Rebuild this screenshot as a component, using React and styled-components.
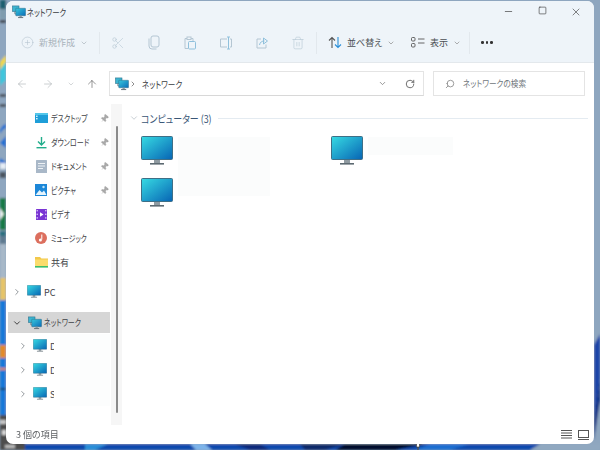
import React from 'react';
import styled, { createGlobalStyle } from 'styled-components';
import {
  CirclePlus, Scissors, ChevronDown, ChevronRight, ArrowLeft, ArrowRight, ArrowUp,
  RotateCw, Search, Minus, Square, X, Trash2, Pin,
} from 'lucide-react';

const Global = createGlobalStyle`
  html, body { margin: 0; padding: 0; width: 600px; height: 450px; overflow: hidden; background: #8ea6bf; }
  * { box-sizing: border-box; }
  body { font-family: "Noto Sans CJK JP", "Noto Sans", sans-serif; font-feature-settings: "palt"; }
`;

const Desktop = styled.div`
  position: relative;
  width: 600px;
  height: 450px;
  padding: 1px 6px 6px;
`;
const WallpaperSvg = styled.svg`
  position: absolute;
  left: 0;
  top: 0;
`;
const Window = styled.div`
  position: relative;
  height: 443px;
  background: #fff;
  border-radius: 7px;
  overflow: hidden;
  display: flex;
  flex-direction: column;
  filter: blur(0.3px);
`;
const Narrow = styled.span`
  display: inline-block;
  white-space: nowrap;
  transform: scaleX(${(p) => p.$s || 0.78});
  transform-origin: left center;
  margin-right: ${(p) => p.$mr || 0}px;
`;
const TitleBar = styled.div`
  height: 24px;
  flex: none;
  background: #eef4f9;
  display: flex;
  align-items: center;
  padding: 0 0 2px 6px;
`;
const TitleText = styled.span`
  font-size: 9.5px;
  color: #3a3d41;
  margin-left: 1px;
  flex: 1;
`;
const WinButton = styled.span`
  width: 34px;
  display: flex;
  justify-content: center;
  color: #333;
`;
const WinButtons = styled.div`
  display: flex;
  margin-right: 1px;
`;
const Toolbar = styled.div`
  height: 38px;
  flex: none;
  background: #eef4f9;
  border-bottom: 1px solid #e3e8ec;
  display: flex;
  align-items: center;
  padding-left: 15px;
  padding-bottom: 2px;
`;
const NewButton = styled.div`
  width: 78px;
  display: flex;
  align-items: center;
  color: #a9b3bb;
  font-size: 9px;
  gap: 5px;
`;
const Divider = styled.span`
  width: 1px;
  height: 22px;
  background: #e2e8ed;
  flex: none;
`;
const ToolIcon = styled.span`
  width: 36px;
  display: flex;
  justify-content: center;
  color: #b4c6d3;
`;
const MenuButton = styled.div`
  width: ${(p) => p.$w}px;
  padding-left: ${(p) => p.$pad}px;
  display: flex;
  align-items: center;
  font-size: 9px;
  color: #4a4f53;
  gap: 5px;
`;
const Dots = styled.span`
  margin-left: 11px;
  display: flex;
  gap: 2px;
  & > i { width: 2.5px; height: 2.5px; border-radius: 50%; background: #333; }
`;
const NavRow = styled.div`
  height: 41px;
  flex: none;
  display: flex;
  align-items: flex-start;
  padding: 8px 9px 0 3px;
`;
const NavIcon = styled.span`
  width: ${(p) => p.$w}px;
  height: 25px;
  display: flex;
  align-items: center;
  justify-content: center;
  color: ${(p) => p.$c};
`;
const AddressBox = styled.div`
  width: 315px;
  height: 25px;
  margin-left: 6px;
  border: 1px solid #e4e4e4;
  border-bottom-color: #d8d8d8;
  display: flex;
  align-items: center;
  padding-left: 5px;
  font-size: 9.5px;
  color: #3a3d41;
`;
const AddressText = styled.span`
  flex: 1;
  margin-left: 5px;
`;
const SearchBox = styled.div`
  width: 152px;
  height: 25px;
  margin-left: 9px;
  border: 1px solid #e4e4e4;
  display: flex;
  align-items: center;
  padding-left: 11px;
  gap: 8px;
  font-size: 9px;
  color: #70767b;
`;
const Body = styled.div`
  flex: 1;
  min-height: 0;
  display: flex;
`;
const Sidebar = styled.nav`
  width: 105px;
  flex: none;
  padding-top: 2px;
  font-size: 9px;
  color: #3e4246;
`;
const Row = styled.div`
  height: ${(p) => p.$h || 24}px;
  margin-top: ${(p) => p.$mt || 0}px;
  margin-left: ${(p) => (p.$active ? 2 : 0)}px;
  margin-right: ${(p) => (p.$active ? 1 : 0)}px;
  padding-left: ${(p) => (p.$active ? p.$pad - 2 : p.$pad)}px;
  background: ${(p) => (p.$active ? '#d6d6d6' : 'transparent')};
  display: flex;
  align-items: center;
  position: relative;
`;
const ChevronSlot = styled.span`
  width: 11px;
  display: flex;
  justify-content: center;
  margin-right: ${(p) => p.$mr}px;
  color: ${(p) => p.$c || '#8a8f94'};
`;
const RowLabel = styled.span`
  margin-left: ${(p) => p.$ml}px;
  flex: 1;
  min-width: 0;
  white-space: nowrap;
`;
const ClippedLabel = styled.span`
  width: 4px;
  margin-left: 3px;
  overflow: hidden;
  white-space: nowrap;
`;
const PinSlot = styled.span`
  width: 11px;
  margin-right: 1px;
  display: flex;
  justify-content: center;
  color: #999;
  transform: rotate(40deg);
`;
const ScrollTrack = styled.div`
  width: 11px;
  flex: none;
  background: #f6f6f6;
  padding-top: 22px;
  display: flex;
  justify-content: center;
  & > i { width: 2px; height: 287px; background: #8b8b8b; border-radius: 1px; }
`;
const Content = styled.main`
  flex: 1;
  padding: 7px 6px 0 7px;
`;
const GroupHeader = styled.div`
  display: flex;
  align-items: center;
  height: 14px;
  font-size: 10.5px;
  color: #3a5676;
  gap: 2px;
  & > b {
    flex: 1;
    height: 1px;
    background: #e4ebf1;
    margin-left: 3px;
  }
`;
const FileGrid = styled.div`
  display: grid;
  grid-template-columns: 37px 92px 61px 37px 85px;
  grid-template-rows: 42px 42px;
  margin: 11px 0 0 12px;
`;
const FileCell = styled.div`
  grid-column: ${(p) => p.$col};
  grid-row: ${(p) => p.$row};
`;
const Smudge = styled.div`
  grid-column: ${(p) => p.$col};
  grid-row: ${(p) => p.$row};
  height: ${(p) => p.$h}px;
  background: #fbfcfc;
  margin-top: 1px;
`;
const SideSmudge = styled.span`
  position: absolute;
  left: 54px;
  top: 0;
  width: 50px;
  height: 100%;
  background: #fcfdfd;
`;
const StatusBar = styled.div`
  height: 19px;
  flex: none;
  display: flex;
  align-items: center;
  padding: 0 5px 0 10px;
  font-size: 9px;
  color: #5c5f62;
`;
const StatusText = styled.span`
  flex: 1;
`;
const StatusIcons = styled.span`
  display: flex;
  gap: 6px;
  align-items: center;
`;
const IconSlot = styled.span`
  width: 14px;
  display: flex;
  justify-content: center;
  flex: none;
`;

let uid = 0;
const Monitor = ({ size = 32 }) => {
  const id = `m${uid++}`;
  return (
    <svg width={size} height={size * 30 / 32} viewBox="0 0 32 30" style={{ display: 'block' }}>
      <defs>
        <linearGradient id={id} x1="0" y1="0" x2="1" y2="1">
          <stop offset="0" stopColor="#37dbe3" />
          <stop offset="1" stopColor="#0764b4" />
        </linearGradient>
      </defs>
      <rect x="13" y="23" width="6" height="4" fill="#8f9aa1" />
      <rect x="9" y="27" width="14" height="1.6" fill="#5d6a72" />
      <rect x="0.5" y="0.5" width="31" height="23" rx="1" fill={`url(#${id})`} stroke="#3f6f86" />
    </svg>
  );
};
const NetIcon = () => {
  const id = `n${uid++}`;
  return (
    <svg width="14" height="14" viewBox="0 0 15 14" style={{ display: 'block' }}>
      <defs>
        <linearGradient id={id} x1="0" y1="0" x2="1" y2="1">
          <stop offset="0" stopColor="#37c8dc" />
          <stop offset="1" stopColor="#0a6cb8" />
        </linearGradient>
      </defs>
      <rect x="0.5" y="0.5" width="7" height="6" fill="#3cb4d0" stroke="#2a6f8a" strokeWidth="0.6" />
      <path d="M3 6.5 V9 H5" stroke="#60707a" fill="none" strokeWidth="0.8" />
      <rect x="4" y="3" width="10.5" height="8" rx="0.5" fill={`url(#${id})`} stroke="#2c6a84" strokeWidth="0.5" />
      <rect x="8" y="11" width="2.5" height="1.5" fill="#8f9aa1" />
      <rect x="6.5" y="12.5" width="5.5" height="1" fill="#5d6a72" />
    </svg>
  );
};
const DesktopIcon = () => (
  <svg width="13" height="10" viewBox="0 0 13 10"><rect width="13" height="10" rx="0.5" fill="#1e9ed8" /><rect x="0" y="0" width="13" height="2" fill="#52c6ea" /><rect x="1" y="2.6" width="1.6" height="1.4" fill="#d5f1fb" /><rect x="1" y="5" width="1.6" height="1.4" fill="#d5f1fb" /></svg>
);
const DownloadIcon = () => (
  <svg width="13" height="13" viewBox="0 0 13 13"><path d="M6.5 1 V8.5 M3 5.5 L6.5 9 L10 5.5" stroke="#22ad8b" strokeWidth="1.4" fill="none" /><rect x="1.5" y="11" width="10" height="1.4" fill="#22ad8b" /></svg>
);
const DocIcon = () => (
  <svg width="11" height="13" viewBox="0 0 11 13"><rect width="11" height="13" rx="0.5" fill="#a9b8c8" /><rect x="2" y="3" width="7" height="1" fill="#eef2f5" /><rect x="2" y="5.5" width="7" height="1" fill="#eef2f5" /><rect x="2" y="8" width="5" height="1" fill="#eef2f5" /></svg>
);
const PictureIcon = () => (
  <svg width="12" height="12" viewBox="0 0 12 12"><rect width="12" height="12" fill="#1c87d8" /><path d="M0.5 11 L4.5 6 L7 8.5 L9 6.5 L11.5 11 Z" fill="#e6f4fc" /><circle cx="8.5" cy="3" r="1.2" fill="#bfe6fa" /></svg>
);
const VideoIcon = () => (
  <svg width="11" height="11" viewBox="0 0 11 11"><rect width="11" height="11" rx="0.5" fill="#7a35d4" /><rect x="0.6" y="1" width="1.2" height="1.4" fill="#e5d5fa" /><rect x="0.6" y="4.6" width="1.2" height="1.4" fill="#e5d5fa" /><rect x="0.6" y="8.2" width="1.2" height="1.4" fill="#e5d5fa" /><rect x="9.2" y="1" width="1.2" height="1.4" fill="#e5d5fa" /><rect x="9.2" y="4.6" width="1.2" height="1.4" fill="#e5d5fa" /><rect x="9.2" y="8.2" width="1.2" height="1.4" fill="#e5d5fa" /><path d="M4 3.2 L7.5 5.5 L4 7.8 Z" fill="#fff" /></svg>
);
const MusicIcon = () => (
  <svg width="12" height="12" viewBox="0 0 12 12"><circle cx="6" cy="6" r="6" fill="#dc6f5e" /><path d="M6.8 2.5 V7.5" stroke="#fff" strokeWidth="1" /><circle cx="5.4" cy="8" r="1.5" fill="#fff" /></svg>
);
const FolderIcon = () => (
  <svg width="13" height="12" viewBox="0 0 13 12"><path d="M0 1 H5 L6.5 2.5 H13 V11 H0 Z" fill="#f2c84b" /><rect y="3.5" width="13" height="7" fill="#fbdc6c" /><rect y="10" width="13" height="1.6" fill="#3ebd6a" /></svg>
);
const CopyIcon = () => (
  <svg width="14" height="15" viewBox="0 0 14 15" fill="none" stroke="currentColor" strokeWidth="1"><rect x="4" y="1" width="8" height="11" rx="2" /><path d="M2 3.5 V11 Q2 14 5 14 H9.5" /></svg>
);
const PasteIcon = () => (
  <svg width="14" height="14" viewBox="0 0 14 14" fill="none" stroke="currentColor" strokeWidth="1"><path d="M4 2.5 H2 V12.5 H5" /><path d="M8 2.5 H10 V5" /><rect x="4" y="1" width="4" height="2.5" /><rect x="5.5" y="5.5" width="7" height="7.5" rx="1" stroke="#8fc0dc" /></svg>
);
const RenameIcon = () => (
  <svg width="14" height="14" viewBox="0 0 14 14" fill="none" stroke="currentColor" strokeWidth="1"><path d="M8 3 H1.5 V11 H8" /><path d="M11 3 H12.5 V11 H11" /><path d="M9.5 1 V13 M8 1 H11 M8 13 H11" stroke="#8fc0dc" /></svg>
);
const ShareIcon = () => (
  <svg width="14" height="14" viewBox="0 0 14 14" fill="none" stroke="currentColor" strokeWidth="1"><path d="M6 3 H2 V12 H11 V8.5" /><path d="M4.5 9 C5 6 7 5 9.5 5 M8.5 2 L12.5 5 L8.5 8 Z" stroke="#8fc0dc" /></svg>
);
const SortIcon = () => (
  <svg width="14" height="13" viewBox="0 0 14 13" fill="none" strokeWidth="1.1"><path d="M4 12 V1.5 M1 4.5 L4 1.5 L7 4.5" stroke="#555" /><path d="M10 1 V11.5 M7 8.5 L10 11.5 L13 8.5" stroke="#2a8fd8" /></svg>
);
const ViewIcon = () => (
  <svg width="14" height="11" viewBox="0 0 14 11" fill="none" stroke="#555" strokeWidth="0.9"><rect x="0.5" y="0.5" width="3.5" height="3.5" rx="1" /><rect x="0.5" y="6.5" width="3.5" height="3.5" rx="1" /><path d="M7 2 H13.5 M7 6 H13.5" /></svg>
);
const ListViewIcon = () => (
  <svg width="11" height="9" viewBox="0 0 11 9" stroke="#555" strokeWidth="1"><path d="M0 .5 H11 M0 3 H11 M0 5.5 H11 M0 8 H11" /></svg>
);
const TileViewIcon = () => (
  <svg width="11" height="10" viewBox="0 0 11 10" fill="none" stroke="#555"><rect x="0.5" y="0.5" width="10" height="7" /><path d="M0 9.5 H11" /></svg>
);

const Wallpaper = () => (
  <WallpaperSvg width="600" height="450" viewBox="0 0 600 450">
    <defs>
      <filter id="soft"><feGaussianBlur stdDeviation="0.8" /></filter>
    </defs>
    <g filter="url(#soft)">
      <rect width="600" height="450" fill="#8ea6bf" />
      <rect x="0" y="0" width="6" height="9" fill="#1a5f70" />
      <rect x="0" y="9" width="6" height="10" fill="#7f9cae" />
      <rect x="0" y="20" width="6" height="3" fill="#3c3f46" />
      <path d="M0 62 L6 55 V62 L0 70 Z" fill="#f0d84a" />
      <path d="M0 70 L6 62 V80 L0 86 Z" fill="#3fc6dc" />
      <rect x="0" y="94" width="6" height="3" fill="#4a4f58" />
      <rect x="0" y="104" width="6" height="3" fill="#4a4f58" />
      <path d="M0 130 Q3 124 6 124 V128 Q3 128 0 134 Z" fill="#1e6fd2" />
      <path d="M0 143 L6 136 V148 Z" fill="#1e6fd2" />
      <path d="M0 158 L6 162 V167 L0 163 Z" fill="#1e6fd2" />
      <rect x="0" y="163" width="6" height="6" fill="#e6edf4" />
      <rect x="0" y="172" width="6" height="6" fill="#4c5560" />
      <rect x="0" y="198" width="6" height="32" fill="#167a46" />
      <path d="M0 208 L4 214 L0 220 Z" fill="#f3f7f4" />
      <rect x="0" y="231" width="6" height="5" fill="#2a6f80" />
      <rect x="0" y="236" width="6" height="8" fill="#5f7a90" />
      <rect x="0" y="244" width="6" height="34" fill="#a7b8c8" />
      <rect x="0" y="278" width="6" height="22" fill="#e6c468" />
      <rect x="0" y="300" width="6" height="115" fill="#1278d8" />
      <rect x="0" y="345" width="6" height="13" fill="#e28a2c" />
      <rect x="0" y="368" width="6" height="2" fill="#e28a2c" />
      <rect x="0" y="388" width="6" height="2" fill="#14425e" />
      <rect x="0" y="415" width="25" height="35" fill="#4e4e4e" />
      <rect x="0" y="420" width="6" height="4" fill="#c9c9c9" />
      <rect x="2" y="430" width="4" height="5" fill="#d9d9d9" />
      <rect x="5" y="445" width="10" height="3" fill="#bdbdbd" />
      <rect x="25" y="444" width="575" height="6" fill="#1048ae" />
      <path d="M85 444 H108 L95 450 H85 Z" fill="#2b8ed8" />
      <path d="M190 444 H205 L212 450 H196 Z" fill="#7db4ea" />
      <path d="M235 444 H260 L270 450 H250 Z" fill="#0a2c7c" />
      <path d="M300 444 H345 L325 450 H305 Z" fill="#0e2a6a" />
      <path d="M345 444 H425 L395 450 H335 Z" fill="#060f2e" />
      <path d="M430 444 H470 L450 450 H415 Z" fill="#1a6ed0" />
      <path d="M540 444 H600 V450 H530 Z" fill="#90a8c0" />
      <path d="M594 345 L600 334 V378 L594 420 Z" fill="#1a44a8" />
      <path d="M594 420 L600 378 V400 L594 440 Z" fill="#0f2e82" />
    </g>
    <path d="M418 444 V450" stroke="#555" strokeWidth="1.4" />
    <path d="M414.5 444 L418 440.5 L421.5 444 H419.5 V447 H416.5 V444 Z" fill="#fff" stroke="#444" strokeWidth="0.7" />
  </WallpaperSvg>
);

const pinned = [
  ['デスクトップ', DesktopIcon],
  ['ダウンロード', DownloadIcon],
  ['ドキュメント', DocIcon],
  ['ピクチャ', PictureIcon],
];
const libraries = [
  ['ビデオ', VideoIcon],
  ['ミュージック', MusicIcon],
  ['共有', FolderIcon],
];

export default function App() {
  return (
    <>
      <Global />
      <Desktop>
        <Wallpaper />
        <Window>
          <TitleBar>
            <NetIcon />
            <TitleText><Narrow $s={0.78}>ネットワーク</Narrow></TitleText>
            <WinButtons>
              <WinButton><Minus size={11} strokeWidth={1.4} /></WinButton>
              <WinButton><Square size={9} strokeWidth={1.6} /></WinButton>
              <WinButton><X size={12} strokeWidth={1.2} /></WinButton>
            </WinButtons>
          </TitleBar>
          <Toolbar>
            <NewButton>
              <CirclePlus size={13} strokeWidth={1} color="#b0c0cc" />
              <span>新規作成</span>
              <ChevronDown size={8} />
            </NewButton>
            <Divider />
            <ToolIcon><Scissors size={14} strokeWidth={1} /></ToolIcon>
            <ToolIcon><CopyIcon /></ToolIcon>
            <ToolIcon><PasteIcon /></ToolIcon>
            <ToolIcon><RenameIcon /></ToolIcon>
            <ToolIcon><ShareIcon /></ToolIcon>
            <ToolIcon><Trash2 size={14} strokeWidth={1} /></ToolIcon>
            <Divider />
            <MenuButton $w={84} $pad={11}>
              <SortIcon />
              <span>並べ替え</span>
              <ChevronDown size={8} color="#888" />
            </MenuButton>
            <MenuButton $w={68} $pad={10}>
              <ViewIcon />
              <span>表示</span>
              <ChevronDown size={8} color="#888" />
            </MenuButton>
            <Divider />
            <Dots><i /><i /><i /></Dots>
          </Toolbar>
          <NavRow>
            <NavIcon $w={26} $c="#a3a8ac"><ArrowLeft size={12} strokeWidth={1.1} /></NavIcon>
            <NavIcon $w={26} $c="#a3a8ac"><ArrowRight size={12} strokeWidth={1.1} /></NavIcon>
            <NavIcon $w={20} $c="#a3a8ac"><ChevronDown size={8} strokeWidth={1.4} /></NavIcon>
            <NavIcon $w={22} $c="#444"><ArrowUp size={12} strokeWidth={1.1} /></NavIcon>
            <AddressBox>
              <NetIcon />
              <ChevronRight size={8} color="#555" />
              <AddressText><Narrow $s={0.8}>ネットワーク</Narrow></AddressText>
              <ChevronDown size={9} color="#777" />
              <RotateCw size={10} color="#555" style={{ margin: '0 8px 0 18px' }} />
            </AddressBox>
            <SearchBox>
              <Search size={10} color="#888" style={{ transform: 'scaleX(-1)' }} />
              <Narrow $s={0.85}>ネットワークの検索</Narrow>
            </SearchBox>
          </NavRow>
          <Body>
            <Sidebar>
              {pinned.map(([label, Icon]) => (
                <Row key={label} $pad={28}>
                  <IconSlot><Icon /></IconSlot>
                  <RowLabel $ml={3}><Narrow>{label}</Narrow></RowLabel>
                  <PinSlot><Pin size={9} fill="#aaa" strokeWidth={1} /></PinSlot>
                </Row>
              ))}
              {libraries.map(([label, Icon]) => (
                <Row key={label} $pad={28}>
                  <IconSlot><Icon /></IconSlot>
                  <RowLabel $ml={3}><Narrow $s={label === '共有' ? 1 : 0.75}>{label}</Narrow></RowLabel>
                </Row>
              ))}
              <Row $pad={5} $mt={6}>
                <ChevronSlot $mr={5}><ChevronRight size={10} strokeWidth={2.2} /></ChevronSlot>
                <Monitor size={14} />
                <RowLabel $ml={3}>PC</RowLabel>
              </Row>
              <Row $pad={5} $mt={8} $h={21} $active>
                <ChevronSlot $mr={6} $c="#444"><ChevronDown size={10} strokeWidth={2.4} /></ChevronSlot>
                <NetIcon />
                <RowLabel $ml={2}><Narrow>ネットワーク</Narrow></RowLabel>
              </Row>
              {['D', 'D', 'S'].map((l, i) => (
                <Row key={i} $pad={11} $mt={i === 0 ? 1 : 0}>
                  <ChevronSlot $mr={5}><ChevronRight size={10} strokeWidth={2.2} /></ChevronSlot>
                  <Monitor size={14} />
                  <ClippedLabel>{l}</ClippedLabel>
                  <SideSmudge />
                </Row>
              ))}
            </Sidebar>
            <ScrollTrack><i /></ScrollTrack>
            <Content>
              <GroupHeader>
                <ChevronDown size={10} strokeWidth={1} color="#7d8a96" />
                <Narrow $s={0.85} $mr={-11}>コンピューター (3)</Narrow>
                <b />
              </GroupHeader>
              <FileGrid>
                <FileCell $col={1} $row={1}><Monitor /></FileCell>
                <Smudge $col={2} $row="1 / span 2" $h={59} />
                <FileCell $col={4} $row={1}><Monitor /></FileCell>
                <Smudge $col={5} $row={1} $h={18} />
                <FileCell $col={1} $row={2}><Monitor /></FileCell>
              </FileGrid>
            </Content>
          </Body>
          <StatusBar>
            <StatusText>3 個の項目</StatusText>
            <StatusIcons>
              <ListViewIcon />
              <TileViewIcon />
            </StatusIcons>
          </StatusBar>
        </Window>
      </Desktop>
    </>
  );
}
